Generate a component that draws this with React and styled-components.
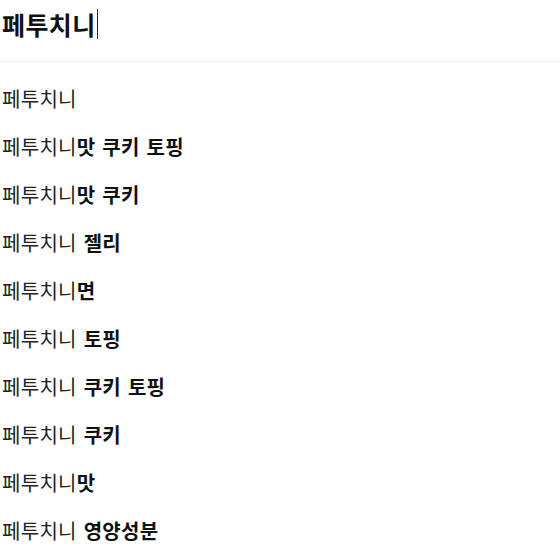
import styled, { createGlobalStyle } from "styled-components";

const GlobalStyle = createGlobalStyle`
  body {
    margin: 0;
    background: #fff;
    font-family: "Noto Sans CJK KR", "Noto Sans", sans-serif;
    color: #111;
  }
`;

const Page = styled.div`
  width: 560px;
  height: 560px;
  overflow: hidden;
`;

const SearchBar = styled.div`
  height: 61px;
  border-bottom: 1px solid #eeeeee;
  display: flex;
  align-items: flex-start;
  padding: 0 0 0 2px;
  box-sizing: content-box;
`;

const Query = styled.div`
  display: flex;
  align-items: center;
  height: 47px;
  font-size: 25px;
  font-weight: 700;
  letter-spacing: 0.4px;
  color: #111;
`;

const Caret = styled.span`
  display: inline-block;
  width: 1px;
  height: 30px;
  margin-left: 1px;
  background: #222;
`;

const List = styled.ul`
  list-style: none;
  margin: 0;
  padding: 13px 0 0 2px;
`;

const Item = styled.li`
  height: 48px;
  line-height: 48px;
  font-size: 20px;
  letter-spacing: 0.3px;
  word-spacing: 2px;
  color: #222;
  white-space: nowrap;
`;

const Rest = styled.b`
  font-weight: 700;
  color: #111;
`;

// suggestions: typed prefix in regular weight, completion in bold
const suggestions = [
  ["페투치니", ""],
  ["페투치니", "맛 쿠키 토핑"],
  ["페투치니", "맛 쿠키"],
  ["페투치니", " 젤리"],
  ["페투치니", "면"],
  ["페투치니", " 토핑"],
  ["페투치니", " 쿠키 토핑"],
  ["페투치니", " 쿠키"],
  ["페투치니", "맛"],
  ["페투치니", " 영양성분"],
];

const App = () => {
  return (
    <Page>
      <GlobalStyle />
      <SearchBar>
        <Query>
          페투치니
          <Caret />
        </Query>
      </SearchBar>
      <List>
        {suggestions.map(([typed, rest], i) => (
          <Item key={i}>
            {typed}
            {rest && <Rest>{rest}</Rest>}
          </Item>
        ))}
      </List>
    </Page>
  );
};

export default App;
